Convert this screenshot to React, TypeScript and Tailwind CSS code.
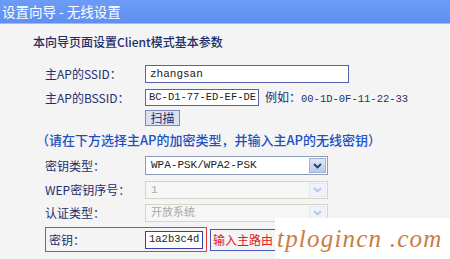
const navy = 'text-[#1f2f6b]'

function Chevron({ light }: { light?: boolean }) {
  return (
    <svg width="9" height="6" viewBox="0 0 9 6">
      <path d="M1 1 L4.5 4.5 L8 1" fill="none" stroke={light ? '#b9c8e0' : '#1d3a78'} strokeWidth="1.8" />
    </svg>
  )
}

function Select({ value, disabled, h }: { value: string; disabled?: boolean; h: string }) {
  return (
    <div
      className={`flex w-[183px] ${h} items-center border ${
        disabled ? 'border-[#d6d3c8] bg-[#f6f6f6] text-[#a8a8a8]' : 'border-[#8b9bb8] bg-white text-[#222]'
      }`}
    >
      <span className="flex-1 pl-[5px] font-['Liberation_Mono','Noto_Sans_CJK_SC',monospace] text-[11px]">{value}</span>
      <span
        className={`mr-px flex h-[calc(100%-2px)] w-[17px] items-center justify-center border ${
          disabled ? 'border-[#e4eaf4] bg-[#eef2fa]' : 'border-[#9fb2d2] bg-gradient-to-b from-[#dfe7f6] to-[#b9c9e6]'
        }`}
      >
        <Chevron light={disabled} />
      </span>
    </div>
  )
}

function Row({ label, children, h }: { label: string; children: React.ReactNode; h: string }) {
  return (
    <div className={`flex ${h} items-center`}>
      <div className={`w-[145px] shrink-0 pl-[45px] text-[12px] whitespace-nowrap ${navy}`}>{label}</div>
      {children}
    </div>
  )
}

export default function App() {
  return (
    <div className="relative h-[259px] w-[450px] overflow-hidden bg-[#f4f4f4] font-['Noto_Sans_CJK_SC',sans-serif]">
      <div className="flex h-[24px] items-center border-b border-[#9dbcf8] bg-gradient-to-b from-[#6d9cf7] to-[#5f8ff0] pl-[2px] text-[13.5px] text-white">
        设置向导 - 无线设置
      </div>

      <div className={`mt-[10px] pl-[33px] text-[12px] leading-[16px] font-medium ${navy}`}>
        本向导页面设置Client模式基本参数
      </div>

      <div className="mt-[15px] flex flex-col">
        <Row label="主AP的SSID：" h="h-[18px]">
          <div className="flex h-[18px] w-[204px] items-center border border-[#5a5fae] bg-white pl-[4px] font-['Liberation_Mono',monospace] text-[11px] text-[#222]">
            zhangsan
          </div>
        </Row>

        <div className="mt-[6px]">
          <Row label="主AP的BSSID：" h="h-[17px]">
            <div className="flex h-[17px] w-[114px] items-center border border-[#5a5fae] bg-white pl-[3px] font-['Liberation_Mono',monospace] text-[10.5px] whitespace-nowrap text-[#222]">
              BC-D1-77-ED-EF-DE
            </div>
            <span className={`ml-[6px] text-[12px] whitespace-nowrap ${navy}`}>
              例如：<span className="font-['Liberation_Mono',monospace] text-[10.5px]">00-1D-0F-11-22-33</span>
            </span>
          </Row>
        </div>

        <div className="mt-[4px] flex h-[16px] pl-[145px]">
          <div className={`flex w-[35px] items-center justify-center border border-[#7d8ab8] bg-[#d9e1f2] text-[12px] ${navy}`}>
            扫描
          </div>
        </div>

        <div className="mt-[6px] pl-[36px] text-[13px] leading-[16px] font-medium whitespace-nowrap text-[#2050c0]">
          （请在下方选择主AP的加密类型，并输入主AP的无线密钥）
        </div>

        <div className="mt-[8px]">
          <Row label="密钥类型：" h="h-[19px]">
            <Select value="WPA-PSK/WPA2-PSK" h="h-[19px]" />
          </Row>
        </div>
        <div className="mt-[6px]">
          <Row label="WEP密钥序号：" h="h-[18px]">
            <Select value="1" disabled h="h-[18px]" />
          </Row>
        </div>
        <div className="mt-[5px]">
          <Row label="认证类型：" h="h-[18px]">
            <Select value="开放系统" disabled h="h-[18px]" />
          </Row>
        </div>

        <div className="mt-[5px] flex h-[25px] items-center">
          <div className="ml-[45px] flex h-[25px] w-[162px] items-center border border-[#e33b3b]">
            <span className={`w-[99px] pl-[3px] text-[12px] ${navy}`}>密钥：</span>
            <div className="flex h-[18px] w-[58px] items-center border border-[#3a3fa8] bg-white pl-[3px] font-['Liberation_Mono',monospace] text-[10.5px] text-[#222]">
              1a2b3c4d
            </div>
          </div>
          <div className="ml-[3px] flex h-[22px] w-[65px] items-center overflow-hidden border-y border-l border-[#4a55c0] pl-[2px] text-[12px] whitespace-nowrap text-[#e02020]">
            输入主路由
          </div>
        </div>
      </div>

      <div className="absolute left-[275px] top-[218px] flex h-[41px] w-[175px] items-center overflow-hidden bg-white pl-[2px] font-['Liberation_Serif',serif] text-[25px] tracking-[1.2px] whitespace-nowrap italic text-[#c97c45]">
        tplogincn .com
      </div>
    </div>
  )
}
